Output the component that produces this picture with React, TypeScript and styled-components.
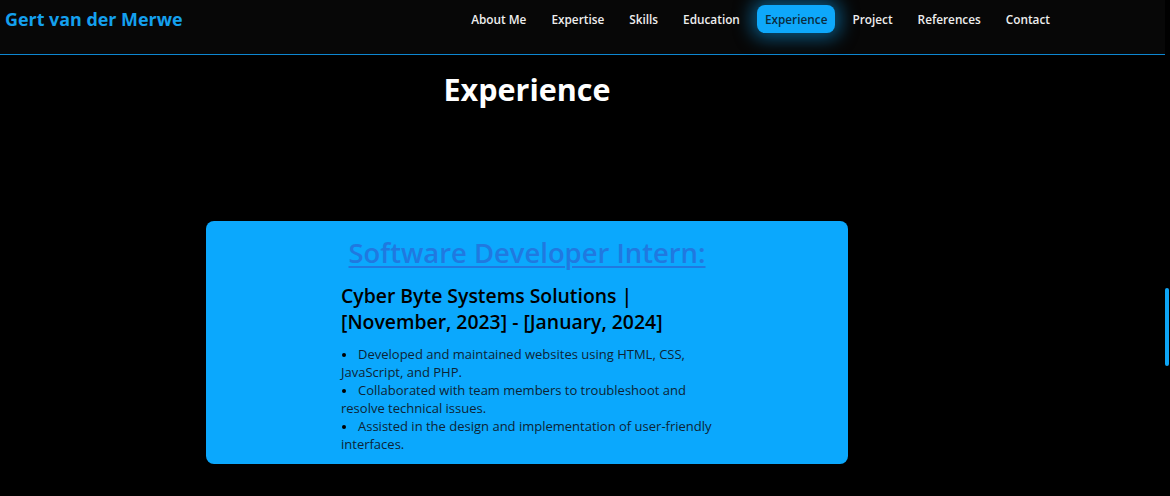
import styled, { createGlobalStyle } from 'styled-components'

const GlobalStyle = createGlobalStyle`
  html, body {
    margin: 0;
    padding: 0;
    background: #000;
    overflow: hidden;
  }
  body {
    font-family: "Open Sans", "Liberation Sans", sans-serif;
  }
  * {
    box-sizing: border-box;
  }
`

const Page = styled.div`
  width: calc(100% - 5px);
  min-height: 496px;
  background: #000;
`

// Header
const Header = styled.header`
  height: 55px;
  background: #070707;
  border-bottom: 1px solid #0d86d0;
`

const HeaderInner = styled.div`
  width: 1058px;
  height: 100%;
  display: flex;
  align-items: flex-start;
  justify-content: space-between;
  padding: 7px 0 0 5px;
`

const Logo = styled.div`
  font-size: 17.9px;
  font-weight: 700;
  color: #14a0ee;
  line-height: 24px;
`

const Nav = styled.nav`
  display: flex;
  align-items: center;
  gap: 9px;
  margin-top: -2px;
`

const NavLink = styled.a<{ $active?: boolean }>`
  display: block;
  padding: 0 8px;
  height: 28px;
  line-height: 28px;
  font-size: 11.8px;
  font-weight: 600;
  text-decoration: none;
  border-radius: 8px;
  color: ${p => (p.$active ? '#0b2c40' : '#eeeeee')};
  background: ${p => (p.$active ? '#0ea8fb' : 'transparent')};
  box-shadow: ${p => (p.$active ? '0 0 18px 5px rgba(14, 168, 251, 0.5)' : 'none')};
`

// Main section
const Section = styled.section`
  width: 1054px;
  display: flex;
  flex-direction: column;
  align-items: center;
  padding-top: 12px;
`

const Title = styled.h2`
  margin: 0;
  font-size: 30.5px;
  font-weight: 700;
  color: #fff;
  line-height: 44px;
`

const Card = styled.div`
  margin-top: 110px;
  width: 642px;
  height: 243px;
  background: #0ba8fd;
  border-radius: 8px;
  padding: 14px 0 0;
  display: flex;
  flex-direction: column;
  align-items: center;
`

const JobTitle = styled.a`
  font-size: 27.4px;
  font-weight: 600;
  color: #2079e0;
  text-decoration: underline;
  text-decoration-thickness: 2px;
  text-underline-offset: 3px;
  line-height: 36px;
`

const Body = styled.div`
  width: 372px;
  margin-top: 12px;
`

const Company = styled.h3`
  margin: 0;
  font-size: 19.4px;
  font-weight: 600;
  line-height: 26px;
  color: #000;
`

const List = styled.ul`
  margin: 10px 0 0;
  padding: 0;
  list-style: none;
`

const Item = styled.li`
  font-size: 13px;
  line-height: 18px;
  color: #0d2435;

  &::before {
    content: '';
    display: inline-block;
    width: 4px;
    height: 4px;
    border-radius: 50%;
    background: #000;
    margin: 0 12px 2px 1px;
    vertical-align: middle;
  }
`

const ScrollThumb = styled.div`
  position: fixed;
  right: 1px;
  top: 288px;
  width: 4px;
  height: 78px;
  border-radius: 2px;
  background: #0ea5f5;
`

const navItems = ['About Me', 'Expertise', 'Skills', 'Education', 'Experience', 'Project', 'References', 'Contact']

const duties = [
  'Developed and maintained websites using HTML, CSS, JavaScript, and PHP.',
  'Collaborated with team members to troubleshoot and resolve technical issues.',
  'Assisted in the design and implementation of user-friendly interfaces.',
]

export default function App() {
  return (
    <>
      <GlobalStyle />
      <Page>
        <Header>
          <HeaderInner>
            <Logo>Gert van der Merwe</Logo>
            <Nav>
              {navItems.map(item => (
                <NavLink key={item} href="#" $active={item === 'Experience'}>
                  {item}
                </NavLink>
              ))}
            </Nav>
          </HeaderInner>
        </Header>
        <Section>
          <Title>Experience</Title>
          <Card>
            <JobTitle href="#">Software Developer Intern:</JobTitle>
            <Body>
              <Company>
                Cyber Byte Systems Solutions | [November, 2023] - [January, 2024]
              </Company>
              <List>
                {duties.map(d => (
                  <Item key={d}>{d}</Item>
                ))}
              </List>
            </Body>
          </Card>
        </Section>
      </Page>
      <ScrollThumb />
    </>
  )
}
